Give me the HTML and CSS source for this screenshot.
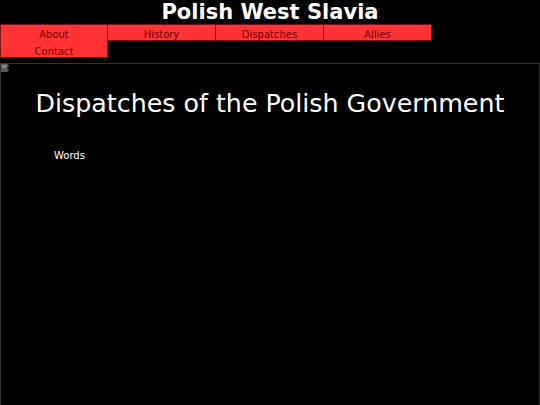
FILE: index.html
```html
<!DOCTYPE html>
<html>
<head>
<meta charset="utf-8">
<title>Polish West Slavia</title>
<link rel="stylesheet" href="styles.css">
</head>
<body>
<h1 class="site-title">Polish West Slavia</h1>
<nav class="nav">
  <div class="nav-item nav-item-tall">
    <a class="nav-link" href="#">About</a>
    <a class="nav-link" href="#">Contact</a>
  </div>
  <div class="nav-item"><a class="nav-link" href="#">History</a></div>
  <div class="nav-item"><a class="nav-link" href="#">Dispatches</a></div>
  <div class="nav-item"><a class="nav-link" href="#">Allies</a></div>
</nav>
<main class="content">
  <svg class="broken-img" width="9" height="9" viewBox="0 0 9 9">
    <path d="M0 0 H7 L8 2 L6 4 L8 6 L6 8 H0 Z" fill="#5a5a5a"/>
    <path d="M1 1 H5 V4 H1 Z" fill="#7d8c7d"/>
  </svg>
  <h2 class="page-title">Dispatches of the Polish Government</h2>
  <p class="words">Words</p>
</main>
</body>
</html>
```
FILE: styles.css
```css
html, body {
  margin: 0;
  padding: 0;
  background: #000;
  height: 100%;
}
body {
  font-family: "DejaVu Sans", sans-serif;
  color: #fff;
  display: flex;
  flex-direction: column;
}
.site-title {
  margin: 0;
  font-size: 21px;
  font-weight: bold;
  text-align: center;
  line-height: 24px;
}
.nav {
  display: flex;
  align-items: flex-start;
  margin-bottom: 5px;
}
.nav-item {
  width: 108px;
  box-sizing: border-box;
  background: #ff3333;
  border: 1px solid #7a1515;
  display: flex;
  flex-direction: column;
}
.nav-item + .nav-item {
  border-left: none;
}
.nav-link {
  display: block;
  height: 15px;
  line-height: 19px;
  font-size: 10px;
  color: #6e0000;
  text-decoration: none;
  text-align: center;
}
.nav-item-tall .nav-link:last-child {
  margin-top: 2px;
}
.content {
  position: relative;
  flex: 1;
  border: 1px solid #333;
  border-bottom: none;
}
.broken-img {
  position: absolute;
  left: 0;
  top: 0;
}
.page-title {
  margin: 25px 0 0;
  font-size: 25.3px;
  font-weight: normal;
  text-align: center;
  line-height: 29px;
}
.words {
  margin: 32px 0 0 53px;
  font-size: 10px;
  line-height: 12px;
}
```
